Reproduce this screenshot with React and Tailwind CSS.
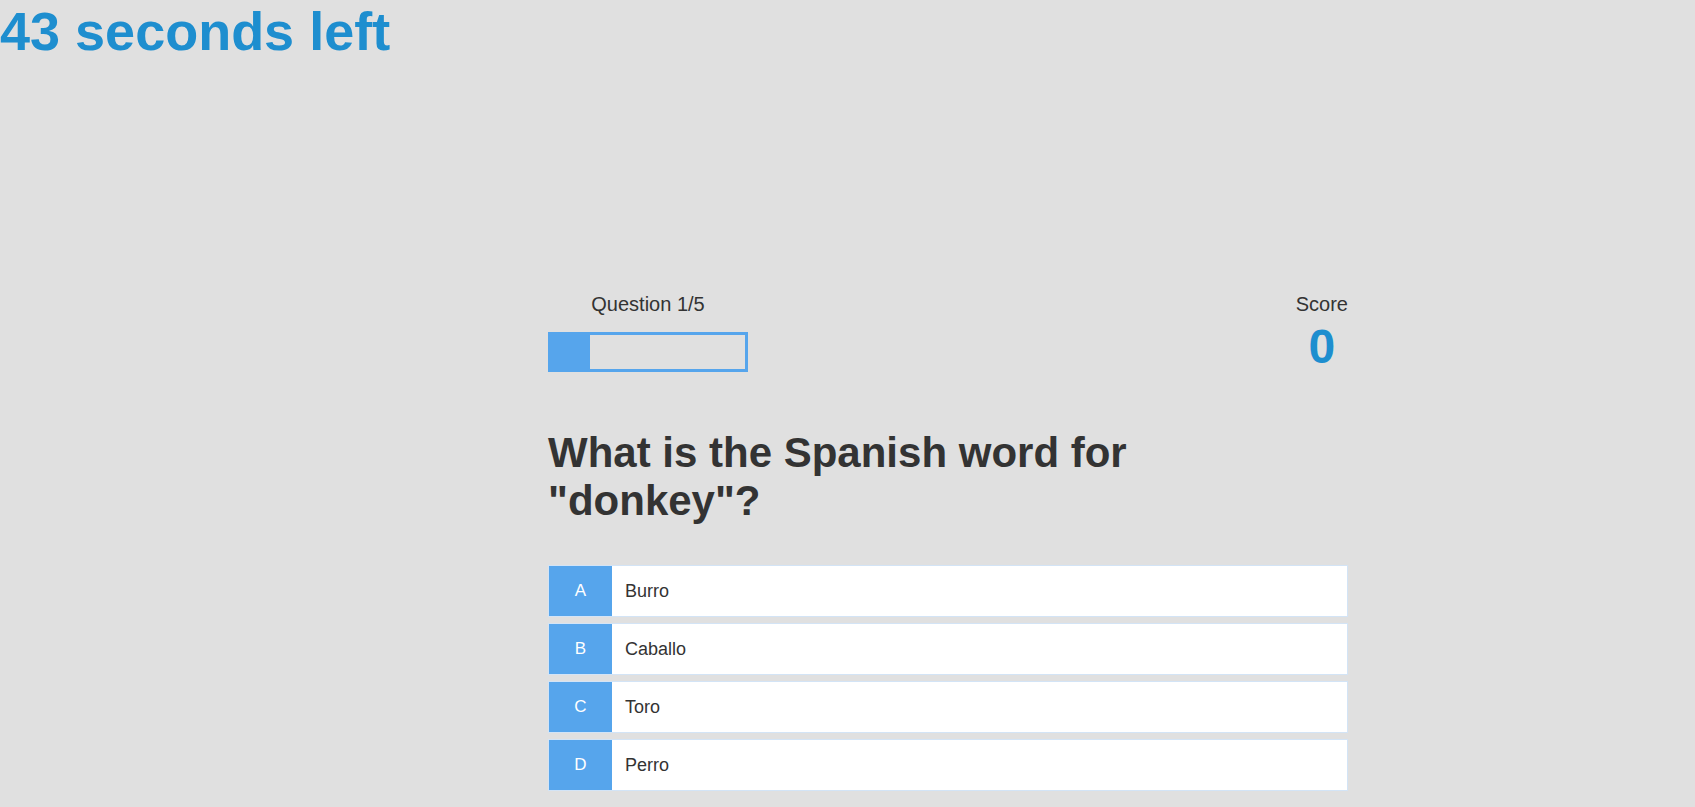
import React from 'react';

const options = [
  { key: 'A', text: 'Burro' },
  { key: 'B', text: 'Caballo' },
  { key: 'C', text: 'Toro' },
  { key: 'D', text: 'Perro' },
];

const App = () => {
  const current = 1;
  const total = 5;
  const progress = (current / total) * 100;

  return (
    <div className="min-h-screen bg-[#e0e0e0] text-[#333333] font-['Liberation_Sans',Arial,sans-serif]">
      {/* Timer */}
      <h1 className="m-0 text-[54px] font-bold leading-[normal] text-[#1e8ecf]">43 seconds left</h1>

      <div className="ml-[548px] w-[800px] pt-[231px]">
        {/* HUD */}
        <div className="flex justify-between items-start">
          <div className="flex flex-col items-center w-[200px]">
            <p className="text-[20px] leading-[normal]">Question {current}/{total}</p>
            <div className="mt-[16px] w-[200px] h-[40px] border-[3px] border-[#56a5ec]">
              <div className="h-full bg-[#56a5ec]" style={{ width: `${progress}%` }}></div>
            </div>
          </div>
          <div className="flex flex-col items-center">
            <p className="text-[20px] leading-[normal]">Score</p>
            <p className="mt-[3px] text-[48px] font-bold leading-[normal] text-[#1e8ecf]">0</p>
          </div>
        </div>

        {/* Question */}
        <h2 className="mt-[55px] max-w-[700px] text-[42px] font-bold leading-[normal]">
          What is the Spanish word for "donkey"?
        </h2>

        {/* Choices */}
        <div className="mt-[40px] flex flex-col gap-[6px]">
          {options.map((o) => (
            <div
              key={o.key}
              className="flex h-[52px] bg-white border border-[#d3e4f6] cursor-pointer"
            >
              <div className="w-[63px] shrink-0 flex items-center justify-center bg-[#56a5ec] text-white text-[17px] font-medium">
                {o.key}
              </div>
              <div className="flex items-center pl-[13px] text-[18px]">{o.text}</div>
            </div>
          ))}
        </div>
      </div>
    </div>
  );
};

export default App;
